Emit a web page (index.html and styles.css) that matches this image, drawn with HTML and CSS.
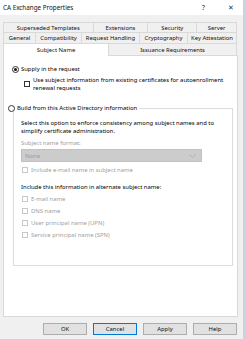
FILE: index.html
```html
<!DOCTYPE html>
<html>
<head>
<meta charset="utf-8">
<link rel="stylesheet" href="styles.css">
</head>
<body>
<div class="window">
  <div class="titlebar">
    <span class="title">CA Exchange Properties</span>
    <span class="help">?</span>
    <span class="close">&#x2715;</span>
  </div>
  <div class="body">
    <div class="tabs">
      <div class="tabrow r1">
        <div class="tab w-sup">Superseded Templates</div>
        <div class="tab w-ext">Extensions</div>
        <div class="tab w-sec">Security</div>
        <div class="tab w-srv">Server</div>
      </div>
      <div class="tabrow r2">
        <div class="tab w-gen">General</div>
        <div class="tab w-com">Compatibility</div>
        <div class="tab w-req">Request Handling</div>
        <div class="tab w-cry">Cryptography</div>
        <div class="tab w-key">Key Attestation</div>
      </div>
      <div class="tabrow r3">
        <div class="tab selected w-sub">Subject Name</div>
        <div class="tab w-iss">Issuance Requirements</div>
      </div>
    </div>
    <div class="panel">
      <div class="row supply">
        <span class="radio checked"></span>
        <span class="label">Supply in the request</span>
      </div>
      <div class="row use">
        <span class="check"></span>
        <span class="label">Use subject information from existing certificates for autoenrollment<br>renewal requests</span>
      </div>
      <fieldset class="group">
        <legend class="legend">
          <span class="radio"></span>
          <span class="label">Build from this Active Directory information</span>
        </legend>
        <p class="desc">Select this option to enforce consistency among subject names and to<br>simplify certificate administration.</p>
        <p class="fmt disabled">Subject name format:</p>
        <div class="select">
          <span class="value">None</span>
          <svg class="chev" width="7" height="4" viewBox="0 0 7 4"><path d="M0.5 0.5 L3.5 3.3 L6.5 0.5" fill="none" stroke="#a8a8a8" stroke-width="0.8"/></svg>
        </div>
        <div class="row opt first disabled">
          <span class="check dis"></span>
          <span class="label">Include e-mail name in subject name</span>
        </div>
        <p class="alt">Include this information in alternate subject name:</p>
        <div class="row opt disabled">
          <span class="check dis"></span>
          <span class="label">E-mail name</span>
        </div>
        <div class="row opt disabled">
          <span class="check dis"></span>
          <span class="label">DNS name</span>
        </div>
        <div class="row opt disabled">
          <span class="check dis"></span>
          <span class="label">User principal name (UPN)</span>
        </div>
        <div class="row opt disabled">
          <span class="check dis"></span>
          <span class="label">Service principal name (SPN)</span>
        </div>
      </fieldset>
    </div>
    <div class="buttons">
      <div class="btn">OK</div>
      <div class="btn focus">Cancel</div>
      <div class="btn">Apply</div>
      <div class="btn">Help</div>
    </div>
  </div>
</div>
</body>
</html>
```
FILE: styles.css
```css
* { box-sizing: border-box; }
html, body { margin: 0; padding: 0; }
body {
  width: 245px;
  height: 339px;
  overflow: hidden;
  font-family: "Noto Sans", "Open Sans", sans-serif;
  font-size: 5.9px;
  color: #000;
  background: #f0f0f0;
}
.window {
  width: 245px;
  height: 339px;
  border-right: 2px solid #c9d3df;
  background: #f0f0f0;
}
.titlebar {
  height: 15px;
  background: #fff;
  display: flex;
  align-items: center;
  padding-left: 3px;
  font-size: 6.3px;
  color: #111;
}
.title { flex: 1; }
.help { width: 26px; font-size: 6.6px; }
.close { width: 15px; font-size: 6.8px; color: #333; font-weight: 300; }
.body {
  padding: 7px 5px 0 3px;
}
.tabs { width: 235px; }
.tabrow {
  display: flex;
  padding-right: 1px;
}
.r1 { height: 10px; }
.r2 { height: 11px; }
.r3 { height: 12px; }
.tab {
  border: 1px solid #d9d9d9;
  border-bottom: none;
  margin-left: -1px;
  display: flex;
  align-items: center;
  justify-content: center;
  white-space: nowrap;
  background: #f0f0f0;
  color: #111;
}
.tabrow .tab:first-child { margin-left: 0; }
.tab.selected {
  background: #fff;
  height: 13px;
  margin-bottom: -1px;
  position: relative;
  z-index: 1;
  align-items: flex-start;
  padding-top: 2px;
}
.w-sup { width: 91px; }
.w-ext { width: 56px; }
.w-sec { width: 50px; }
.w-srv { width: 41px; }
.w-gen { width: 33px; }
.w-com { width: 47px; }
.w-req { width: 59px; }
.w-cry { width: 49px; }
.w-key { width: 50px; }
.w-sub { width: 106px; }
.w-iss { width: 129px; }
.panel {
  width: 235px;
  height: 262px;
  background: #fff;
  border: 1px solid #d9d9d9;
  padding: 9px 0 0 8px;
}
.row {
  display: flex;
  align-items: center;
  line-height: 8px;
}
.label { white-space: nowrap; }
.radio {
  width: 7px;
  height: 7px;
  border: 1px solid #333;
  border-radius: 50%;
  margin-right: 2px;
  display: flex;
  align-items: center;
  justify-content: center;
  flex: none;
  background: #fff;
}
.radio.checked::after {
  content: "";
  width: 3px;
  height: 3px;
  background: #111;
  border-radius: 50%;
}
.check {
  width: 6px;
  height: 6px;
  border: 1px solid #333;
  margin-right: 3px;
  flex: none;
  background: #fff;
}
.check.dis { border-color: #c8c8c8; }
.supply { height: 8px; }
.use {
  margin-top: 3px;
  margin-left: 12px;
  align-items: flex-start;
}
.use .check { margin-top: 5px; }
.use .label { line-height: 8px; }
.group {
  margin: 12px 0 0 1px;
  width: 220px;
  height: 162px;
  border: 1px solid #dcdcdc;
  padding: 0 0 0 7px;
}
.legend {
  display: flex;
  align-items: center;
  height: 8px;
  line-height: 8px;
  padding: 0 2px 0 0;
  margin-left: -13px;
  background: #fff;
}
.desc {
  margin: 8px 0 0 0;
  line-height: 7.5px;
}
.fmt { margin: 4px 0 0 0; line-height: 8px; }
.disabled { color: #a0a0a0; }
.select {
  margin-top: 2px;
  width: 181px;
  height: 13px;
  background: #cccccc;
  border: 1px solid #c2c2c2;
  display: flex;
  align-items: center;
  justify-content: space-between;
  padding: 0 5px 0 3px;
  color: #9a9a9a;
}
.opt { height: 8px; margin-top: 4px; padding-left: 1px; }
.opt.first { margin-top: 4px; }
.alt { margin: 9px 0 0 0; line-height: 8px; }
.buttons {
  display: flex;
  justify-content: flex-end;
  gap: 6px;
  margin-top: 6px;
  padding-right: 1px;
}
.btn {
  width: 44px;
  height: 12px;
  background: #e1e1e1;
  border: 1px solid #adadad;
  display: flex;
  align-items: center;
  justify-content: center;
  color: #111;
}
.btn.focus { border-color: #0078d7; }
```
